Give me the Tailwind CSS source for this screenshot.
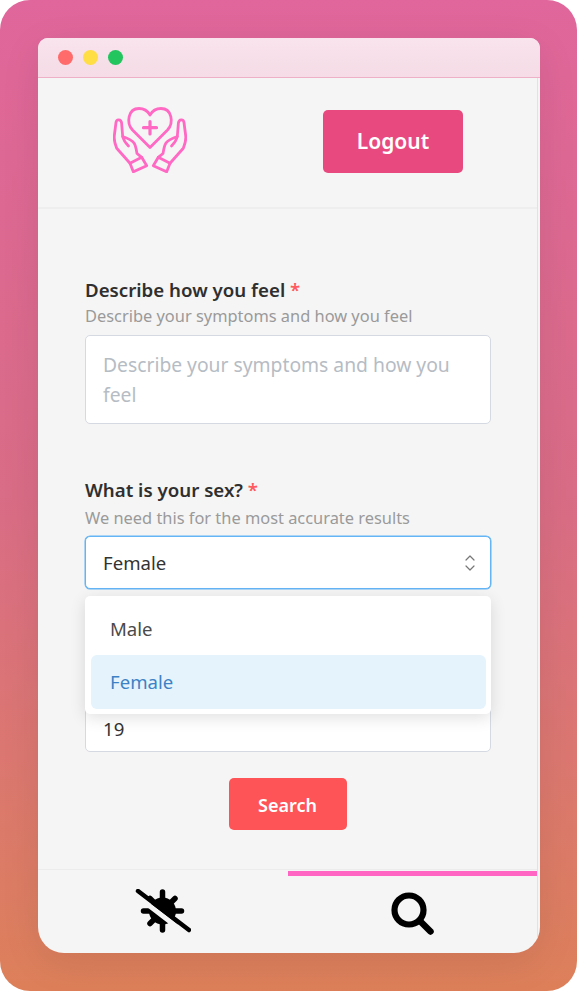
<!DOCTYPE html>
<html lang="en">
<head>
  <meta charset="UTF-8" />
  <title>Symptom search</title>
  <script src="https://cdn.jsdelivr.net/npm/@tailwindcss/browser@4"></script>
</head>
<body class="bg-white font-['Noto_Sans',sans-serif]">

  <!-- Backdrop -->
  <div class="w-[577px] h-[991px] rounded-[30px] bg-gradient-to-b from-[#e0669b] via-[#d96c86] to-[#dd8059] pt-[38px] pl-[38px]">

    <!-- Window -->
    <div class="w-[502px] h-[915px] rounded-t-[10px] rounded-b-[26px] overflow-hidden bg-[#f5f5f5] shadow-[0_10px_40px_rgba(0,0,0,0.08)] flex flex-col">

      <!-- Title bar -->
      <div class="h-[40px] shrink-0 bg-gradient-to-b from-[#f9e3ec] to-[#f5dce6] border-b border-[#eeb0c6] flex items-center gap-[10px] pl-[20px] pb-px">
        <span class="w-[15px] h-[15px] rounded-full bg-[#ff6b6b]"></span>
        <span class="w-[15px] h-[15px] rounded-full bg-[#ffdd44]"></span>
        <span class="w-[15px] h-[15px] rounded-full bg-[#22c55e]"></span>
      </div>

      <!-- Page area -->
      <div class="flex-1 flex flex-col mr-[2px] border-r border-[#e2e2e2]">

        <!-- Header -->
        <header class="h-[131px] shrink-0 border-b-2 border-[#eeeeee] flex items-start">
          <svg class="ml-[75px] mt-[27px]" width="74" height="68" viewBox="0 0 74 68" fill="none" stroke="#ff69c4" stroke-width="2.8" stroke-linecap="round" stroke-linejoin="round">
            <path d="M37 42.5 L19.5 25 C13 18 15 3.5 26 3.5 C31 3.5 35 6.5 37 10 C39 6.5 43 3.5 48 3.5 C59 3.5 61 18 54.5 25 Z" />
            <path d="M37 16.5 V29 M30.5 22.7 H43.5" stroke-width="3.2" />
            <path d="M17 58.3 L3.7 43.3 C1.5 38 0.8 34 1.4 30 L3 17.5 C3.5 14 8 14 8.6 18 L9.7 31.5 C14 33 19 35 21 38 C23 41 23.5 46 24 48.5 L28.7 52.3" />
            <path d="M9.7 31.5 C10.5 35 13 38.5 15.5 41" />
            <path d="M17 58.3 L28.7 52.3 L33.7 60.7 L20.3 66.8 Z" />
            <g transform="translate(74 0) scale(-1 1)">
              <path d="M17 58.3 L3.7 43.3 C1.5 38 0.8 34 1.4 30 L3 17.5 C3.5 14 8 14 8.6 18 L9.7 31.5 C14 33 19 35 21 38 C23 41 23.5 46 24 48.5 L28.7 52.3" />
              <path d="M9.7 31.5 C10.5 35 13 38.5 15.5 41" />
              <path d="M17 58.3 L28.7 52.3 L33.7 60.7 L20.3 66.8 Z" />
            </g>
          </svg>
          <button class="ml-[136px] mt-[32px] w-[140px] h-[63px] rounded-[5px] bg-[#e84a80] text-white text-[21px] font-semibold">Logout</button>
        </header>

        <!-- Form -->
        <main class="relative flex-1 pl-[47px] pr-[46px] pt-[67px]">
          <label class="block text-[18.7px] leading-[28px] font-semibold text-[#2f2f2f]">Describe how you feel <span class="text-[#ff5a5f]">*</span></label>
          <p class="text-[16.4px] leading-[24px] text-[#9a9a9a]">Describe your symptoms and how you feel</p>
          <div class="mt-[7px] h-[89px] bg-white border border-[#d5d9e2] rounded-[5px] px-[17px] pt-[14px] text-[19.3px] leading-[30px] text-[#b6bcc4]">Describe your symptoms and how you feel</div>

          <label class="block mt-[52px] text-[18.7px] leading-[28px] font-semibold text-[#2f2f2f]">What is your sex? <span class="text-[#ff5a5f]">*</span></label>
          <p class="mt-[2px] text-[16.4px] leading-[24px] text-[#9a9a9a]">We need this for the most accurate results</p>
          <div class="mt-[6px] h-[53px] bg-white border border-[#64b5f6] shadow-[0_0_0_0.5px_#64b5f6] rounded-[5px] pl-[17px] pr-[14px] pt-px flex items-center justify-between text-[18.6px] text-[#333333]">
            <span>Female</span>
            <svg width="12" height="18" viewBox="0 0 12 18" fill="none" stroke="#777777" stroke-width="1.2" stroke-linecap="round" stroke-linejoin="round"><path d="M2 6 L6 2 L10 6 M2 12 L6 16 L10 12" /></svg>
          </div>

          <!-- Age input, mostly under the open menu -->
          <div class="mt-[111px] h-[52px] bg-white border border-[#d5d9e2] rounded-[5px] pl-[17px] pt-[5px] flex items-center text-[18.6px] text-[#333333]">19</div>

          <!-- Open menu -->
          <div class="absolute left-[47px] top-[387px] w-[406px] h-[118px] bg-white rounded-[5px] shadow-[0_4px_16px_rgba(0,0,0,0.12)] pl-[6px] pr-[5px] pt-[6px]">
            <div class="h-[53px] pl-[19px] flex items-center text-[18.6px] text-[#4a4a4a]">Male</div>
            <div class="h-[54px] pl-[19px] rounded-[6px] bg-[#e5f3fd] flex items-center text-[18.6px] text-[#3d82c4]">Female</div>
          </div>

          <div class="flex justify-center mt-[26px] pr-px">
            <button class="w-[118px] h-[52px] rounded-[5px] bg-[#ff5457] text-white text-[18px] font-semibold pt-[3px]">Search</button>
          </div>
        </main>

        <!-- Tabs -->
        <nav class="h-[84px] shrink-0 border-t border-[#ececec] flex">
          <div class="w-[250px] flex justify-center">
            <svg class="mt-[19px]" width="56" height="44" viewBox="0 0 56 44" fill="none" stroke="#000000" stroke-linecap="round">
              <path d="M27.5 3 V41 M8.5 22 H46.5 M15 9.5 L40 34.5 M40 9.5 L15 34.5" stroke-width="5.5" />
              <circle cx="27.5" cy="22" r="13.5" fill="#000000" stroke="none" />
              <path d="M3 8 L46 41" stroke="#f5f5f5" stroke-width="5" />
              <path d="M3 2 L54 41" stroke-width="4.5" />
            </svg>
          </div>
          <div class="w-[249px] border-t-[5px] border-[#ff66c4] mt-px flex justify-center">
            <svg class="mt-[14px]" width="50" height="50" viewBox="0 0 50 50" fill="none" stroke="#000000" stroke-linecap="round">
              <circle cx="21" cy="20" r="14.5" stroke-width="6.2" />
              <path d="M32 31 L42.5 41.5" stroke-width="6.5" />
            </svg>
          </div>
        </nav>
      </div>
    </div>
  </div>

</body>
</html>
